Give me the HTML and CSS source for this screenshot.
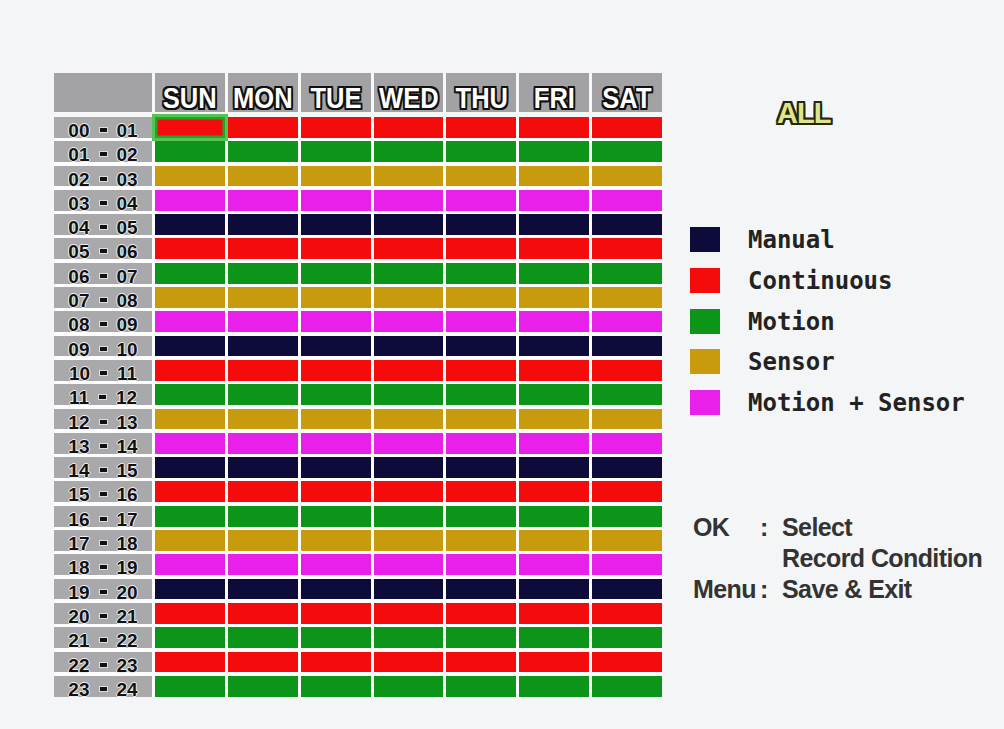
FILE: index.html
```html
<!DOCTYPE html>
<html>
<head>
<meta charset="utf-8">
<link rel="stylesheet" href="styles.css">
</head>
<body>
<div class="screen">
  <div class="schedule">
    <div class="head">
      <div class="corner"></div>
      <div class="day"><span>SUN</span></div>
      <div class="day"><span>MON</span></div>
      <div class="day"><span>TUE</span></div>
      <div class="day"><span>WED</span></div>
      <div class="day"><span>THU</span></div>
      <div class="day"><span>FRI</span></div>
      <div class="day"><span>SAT</span></div>
    </div>
    <div class="rows">
      <div class="row red"><div class="label"><span>00</span><i></i><span>01</span></div><div class="cell sel"></div><div class="cell"></div><div class="cell"></div><div class="cell"></div><div class="cell"></div><div class="cell"></div><div class="cell"></div></div>
      <div class="row green"><div class="label"><span>01</span><i></i><span>02</span></div><div class="cell"></div><div class="cell"></div><div class="cell"></div><div class="cell"></div><div class="cell"></div><div class="cell"></div><div class="cell"></div></div>
      <div class="row sensor"><div class="label"><span>02</span><i></i><span>03</span></div><div class="cell"></div><div class="cell"></div><div class="cell"></div><div class="cell"></div><div class="cell"></div><div class="cell"></div><div class="cell"></div></div>
      <div class="row magenta"><div class="label"><span>03</span><i></i><span>04</span></div><div class="cell"></div><div class="cell"></div><div class="cell"></div><div class="cell"></div><div class="cell"></div><div class="cell"></div><div class="cell"></div></div>
      <div class="row navy"><div class="label"><span>04</span><i></i><span>05</span></div><div class="cell"></div><div class="cell"></div><div class="cell"></div><div class="cell"></div><div class="cell"></div><div class="cell"></div><div class="cell"></div></div>
      <div class="row red"><div class="label"><span>05</span><i></i><span>06</span></div><div class="cell"></div><div class="cell"></div><div class="cell"></div><div class="cell"></div><div class="cell"></div><div class="cell"></div><div class="cell"></div></div>
      <div class="row green"><div class="label"><span>06</span><i></i><span>07</span></div><div class="cell"></div><div class="cell"></div><div class="cell"></div><div class="cell"></div><div class="cell"></div><div class="cell"></div><div class="cell"></div></div>
      <div class="row sensor"><div class="label"><span>07</span><i></i><span>08</span></div><div class="cell"></div><div class="cell"></div><div class="cell"></div><div class="cell"></div><div class="cell"></div><div class="cell"></div><div class="cell"></div></div>
      <div class="row magenta"><div class="label"><span>08</span><i></i><span>09</span></div><div class="cell"></div><div class="cell"></div><div class="cell"></div><div class="cell"></div><div class="cell"></div><div class="cell"></div><div class="cell"></div></div>
      <div class="row navy"><div class="label"><span>09</span><i></i><span>10</span></div><div class="cell"></div><div class="cell"></div><div class="cell"></div><div class="cell"></div><div class="cell"></div><div class="cell"></div><div class="cell"></div></div>
      <div class="row red"><div class="label"><span>10</span><i></i><span>11</span></div><div class="cell"></div><div class="cell"></div><div class="cell"></div><div class="cell"></div><div class="cell"></div><div class="cell"></div><div class="cell"></div></div>
      <div class="row green"><div class="label"><span>11</span><i></i><span>12</span></div><div class="cell"></div><div class="cell"></div><div class="cell"></div><div class="cell"></div><div class="cell"></div><div class="cell"></div><div class="cell"></div></div>
      <div class="row sensor"><div class="label"><span>12</span><i></i><span>13</span></div><div class="cell"></div><div class="cell"></div><div class="cell"></div><div class="cell"></div><div class="cell"></div><div class="cell"></div><div class="cell"></div></div>
      <div class="row magenta"><div class="label"><span>13</span><i></i><span>14</span></div><div class="cell"></div><div class="cell"></div><div class="cell"></div><div class="cell"></div><div class="cell"></div><div class="cell"></div><div class="cell"></div></div>
      <div class="row navy"><div class="label"><span>14</span><i></i><span>15</span></div><div class="cell"></div><div class="cell"></div><div class="cell"></div><div class="cell"></div><div class="cell"></div><div class="cell"></div><div class="cell"></div></div>
      <div class="row red"><div class="label"><span>15</span><i></i><span>16</span></div><div class="cell"></div><div class="cell"></div><div class="cell"></div><div class="cell"></div><div class="cell"></div><div class="cell"></div><div class="cell"></div></div>
      <div class="row green"><div class="label"><span>16</span><i></i><span>17</span></div><div class="cell"></div><div class="cell"></div><div class="cell"></div><div class="cell"></div><div class="cell"></div><div class="cell"></div><div class="cell"></div></div>
      <div class="row sensor"><div class="label"><span>17</span><i></i><span>18</span></div><div class="cell"></div><div class="cell"></div><div class="cell"></div><div class="cell"></div><div class="cell"></div><div class="cell"></div><div class="cell"></div></div>
      <div class="row magenta"><div class="label"><span>18</span><i></i><span>19</span></div><div class="cell"></div><div class="cell"></div><div class="cell"></div><div class="cell"></div><div class="cell"></div><div class="cell"></div><div class="cell"></div></div>
      <div class="row navy"><div class="label"><span>19</span><i></i><span>20</span></div><div class="cell"></div><div class="cell"></div><div class="cell"></div><div class="cell"></div><div class="cell"></div><div class="cell"></div><div class="cell"></div></div>
      <div class="row red"><div class="label"><span>20</span><i></i><span>21</span></div><div class="cell"></div><div class="cell"></div><div class="cell"></div><div class="cell"></div><div class="cell"></div><div class="cell"></div><div class="cell"></div></div>
      <div class="row green"><div class="label"><span>21</span><i></i><span>22</span></div><div class="cell"></div><div class="cell"></div><div class="cell"></div><div class="cell"></div><div class="cell"></div><div class="cell"></div><div class="cell"></div></div>
      <div class="row red"><div class="label"><span>22</span><i></i><span>23</span></div><div class="cell"></div><div class="cell"></div><div class="cell"></div><div class="cell"></div><div class="cell"></div><div class="cell"></div><div class="cell"></div></div>
      <div class="row green"><div class="label"><span>23</span><i></i><span>24</span></div><div class="cell"></div><div class="cell"></div><div class="cell"></div><div class="cell"></div><div class="cell"></div><div class="cell"></div><div class="cell"></div></div>
    </div>
  </div>
  <aside class="side">
    <div class="all">ALL</div>
    <ul class="legend">
      <li><b class="sw navy"></b>Manual</li>
      <li><b class="sw red"></b>Continuous</li>
      <li><b class="sw green"></b>Motion</li>
      <li><b class="sw sensor"></b>Sensor</li>
      <li><b class="sw magenta"></b>Motion + Sensor</li>
    </ul>
    <div class="help">
      <span class="key">OK</span><span class="colon">:</span><span class="txt">Select</span>
      <span class="key"></span><span class="colon"></span><span class="txt">Record Condition</span>
      <span class="key">Menu</span><span class="colon">:</span><span class="txt">Save &amp; Exit</span>
    </div>
  </aside>
</div>
</body>
</html>
```

FILE: styles.css
```css
html, body {
  margin: 0;
  padding: 0;
}
body {
  background: #f3f5f6;
  width: 1004px;
  height: 729px;
  overflow: hidden;
  font-family: "Liberation Sans", Arial, sans-serif;
}
.screen {
  display: flex;
  padding: 73px 0 0 54px;
}
.schedule {
  width: 608px;
  background: #fcfdfc;
}
.head {
  display: flex;
  gap: 3px;
  height: 39px;
  padding-bottom: 5px;
  background: #f6f7f7;
}
.corner {
  width: 98px;
  background: #a3a3a5;
}
.day {
  flex: 1;
  background: #a2a2a4;
  display: flex;
  align-items: flex-end;
  justify-content: center;
}
.day span {
  display: inline-block;
  font-weight: bold;
  font-size: 29px;
  line-height: 28px;
  color: #fff;
  transform: scaleX(0.88);
  text-shadow:
    2px 0 0 #111, -2px 0 0 #111, 0 2px 0 #111, 0 -2px 0 #111,
    2px 2px 0 #111, -2px -2px 0 #111, 2px -2px 0 #111, -2px 2px 0 #111,
    1px 1px 1px #111;
}
.rows {
  display: flex;
  flex-direction: column;
  gap: 3.5px;
}
.row {
  display: flex;
  gap: 3px;
  height: 20.8px;
}
.label {
  width: 98px;
  background: #a9a9ab;
  display: flex;
  justify-content: center;
  align-items: flex-start;
  gap: 10px;
  padding-top: 4px;
  box-sizing: border-box;
  font-weight: bold;
  font-size: 19px;
  line-height: 19px;
  color: #111;
  text-shadow: 1px 0 0 #eee, -1px 0 0 #eee, 0 1px 0 #eee, 0 -1px 0 #eee;
}
.label i {
  display: block;
  width: 7px;
  height: 4px;
  margin-top: 7px;
  background: #111;
  box-shadow: 0 0 0 1px #ddd;
}
.cell {
  flex: 1;
}
.red .cell, .sw.red { background: #f40c0c; }
.green .cell, .sw.green { background: #0c9519; }
.sensor .cell, .sw.sensor { background: #c89b0e; }
.magenta .cell, .sw.magenta { background: #e920e9; }
.navy .cell, .sw.navy { background: #0c0b3a; }
.cell.sel {
  outline: 3px solid #55c455;
  box-shadow: inset 0 0 0 2.5px #23a623;
}
.side {
  margin-left: 28px;
  flex: 1;
}
.all {
  margin: 27px 0 0 87px;
  font-weight: bold;
  font-size: 29px;
  line-height: 27px;
  letter-spacing: -1px;
  color: #dfe58c;
  text-shadow:
    2px 0 0 #262610, -2px 0 0 #262610, 0 2px 0 #262610, 0 -2px 0 #262610,
    2px 2px 0 #262610, -2px -2px 0 #262610, 2px -2px 0 #262610, -2px 2px 0 #262610;
}
.legend {
  list-style: none;
  margin: 100px 0 0 0;
  padding: 0;
  display: flex;
  flex-direction: column;
  gap: 15.8px;
}
.legend li {
  display: flex;
  align-items: flex-start;
  height: 25px;
  font-family: "DejaVu Sans Mono", monospace;
  font-weight: bold;
  font-size: 24px;
  line-height: 27px;
  color: #222;
}
.sw {
  display: block;
  width: 30px;
  height: 25px;
  margin-right: 28px;
}
.help {
  margin: 97px 0 0 3px;
  display: grid;
  grid-template-columns: 67px 22px auto;
  font-size: 25px;
  font-weight: bold;
  letter-spacing: -0.6px;
  line-height: 31px;
  color: #333;
}
```
